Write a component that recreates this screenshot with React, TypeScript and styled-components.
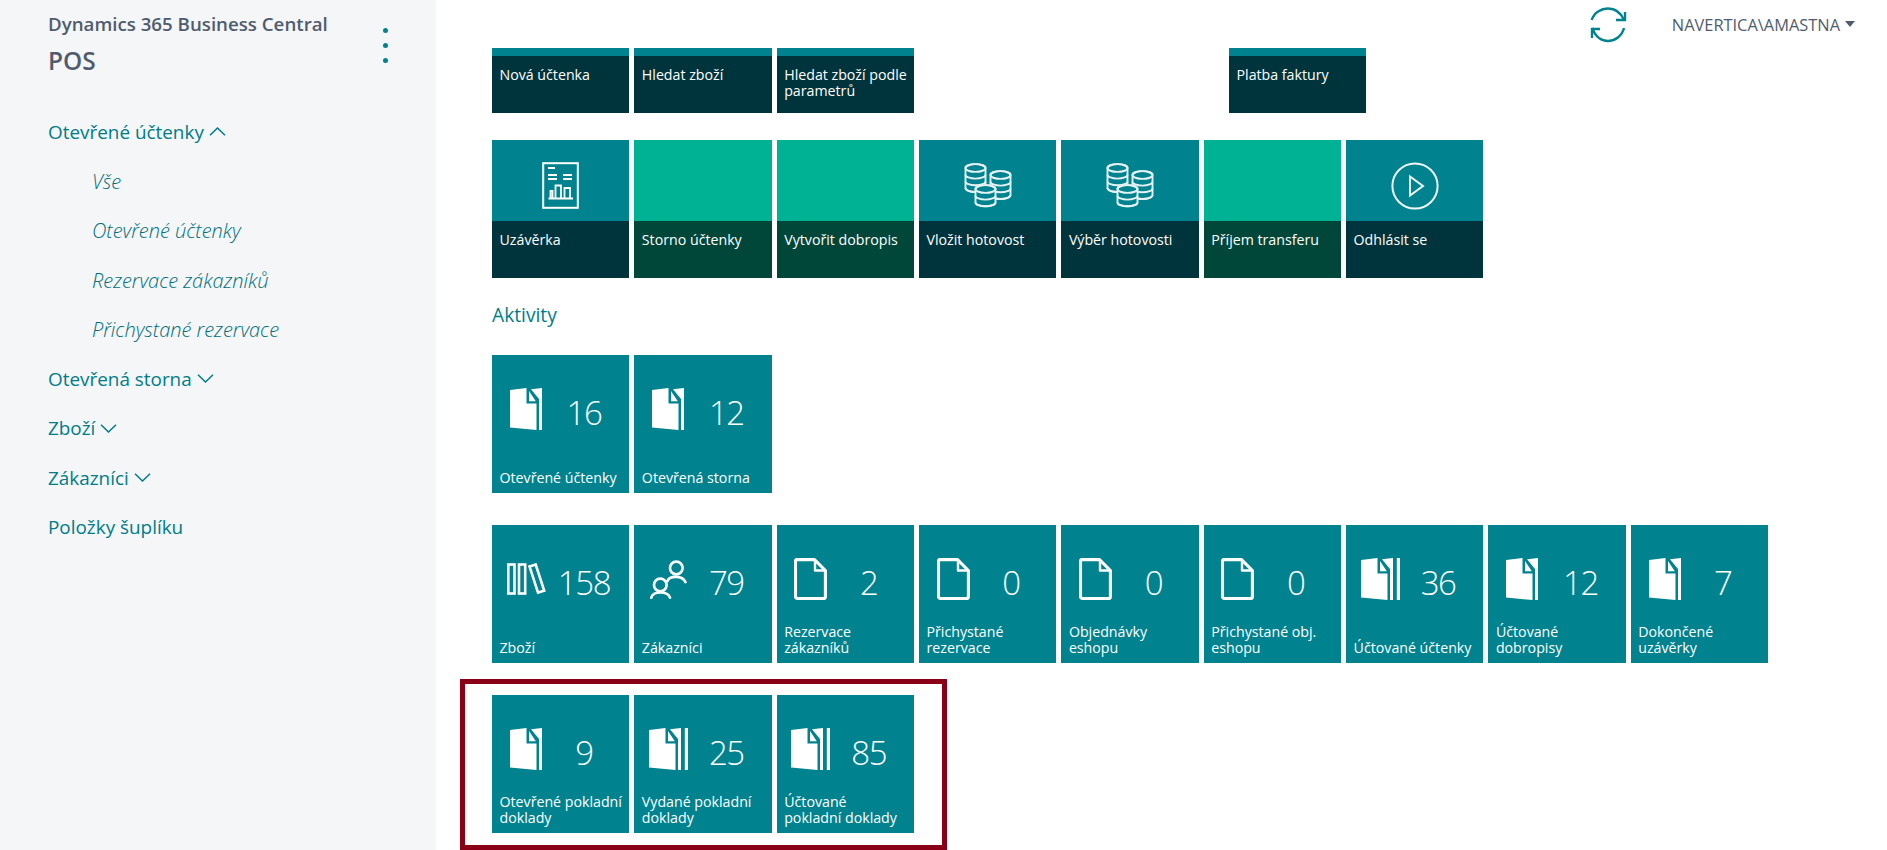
import React from "react";
import styled, { createGlobalStyle } from "styled-components";

const TEAL = "#00828f";
const DARK = "#00343c";
const GREEN = "#00b294";
const DARKGREEN = "#00473a";
const LINK = "#007c88";
const SUBLINK = "#006f7b";
const SLATE = "#505c6d";

const Global = createGlobalStyle`
  html, body { margin: 0; padding: 0; background: #fff; height: 100%; }
  body { font-family: "Open Sans", "Liberation Sans", sans-serif; overflow: hidden; }
  * { box-sizing: border-box; }
`;

const Page = styled.div`
  display: flex;
  width: 1887px;
  height: 850px;
  overflow: hidden;
`;

const Sidebar = styled.aside`
  width: 436px;
  flex: none;
  background: #f5f6f8;
  padding-left: 48px;
  display: flex;
  flex-direction: column;
`;

const SideHead = styled.div`
  display: flex;
  justify-content: space-between;
  padding-right: 48px;
  height: 107px;
  flex: none;
`;

const Titles = styled.div`
  padding-top: 12px;
`;

const Product = styled.div`
  font-size: 18.7px;
  font-weight: 600;
  line-height: 24px;
  color: ${SLATE};
  white-space: nowrap;
`;

const PageName = styled.div`
  font-size: 24.4px;
  font-weight: 600;
  line-height: 32px;
  margin-top: 9px;
  color: ${SLATE};
`;

const Dots = styled.div`
  display: flex;
  flex-direction: column;
  gap: 10px;
  padding-top: 28px;
`;

const Dot = styled.span`
  width: 5px;
  height: 5px;
  border-radius: 50%;
  background: ${TEAL};
`;

const NavItem = styled.div<{ $sub?: boolean }>`
  height: 49.45px;
  flex: none;
  display: flex;
  align-items: center;
  gap: 5px;
  color: ${(p) => (p.$sub ? SUBLINK : LINK)};
  font-size: ${(p) => (p.$sub ? "20px" : "18.9px")};
  font-style: ${(p) => (p.$sub ? "italic" : "normal")};
  font-weight: ${(p) => (p.$sub ? 300 : 400)};
  padding-left: ${(p) => (p.$sub ? "44px" : "0")};
`;

const Main = styled.main`
  flex: 1;
  min-width: 0;
  padding-left: 56px;
  display: flex;
  flex-direction: column;
`;

const TopBar = styled.header`
  height: 48px;
  flex: none;
  display: flex;
  align-items: flex-start;
  justify-content: flex-end;
  padding-right: 32px;
`;

const SyncButton = styled.div`
  margin-top: 6px;
  margin-right: 45px;
  height: 38px;
  color: ${TEAL};
`;

const UserName = styled.div`
  display: flex;
  align-items: center;
  gap: 5px;
  height: 48px;
  color: ${SLATE};
  font-size: 16.4px;
  font-weight: 400;
  white-space: nowrap;
`;

const Caret = styled.span`
  width: 0;
  height: 0;
  border-left: 5px solid transparent;
  border-right: 5px solid transparent;
  border-top: 6px solid ${SLATE};
`;

const Row = styled.div<{ $mt?: number }>`
  display: flex;
  gap: 5px;
  margin-top: ${(p) => p.$mt ?? 0}px;
`;

const SectionTitle = styled.h2`
  margin: 0;
  height: 77px;
  flex: none;
  padding-top: 23px;
  font-size: 19.2px;
  line-height: 28px;
  font-weight: 400;
  color: ${LINK};
`;

const Highlight = styled.div`
  align-self: flex-start;
  margin: 16px 0 0 -32px;
  border: 5px solid #8a0016;
  padding: 11px 28px 12px 27px;
`;

const TileBase = styled.div<{ $pushed?: boolean }>`
  width: 137.35px;
  flex: none;
  color: #fff;
  margin-left: ${(p) => (p.$pushed ? "310px" : "0")};
`;

const ActionTile = styled(TileBase)<{ $green?: boolean; $short?: boolean }>`
  height: ${(p) => (p.$short ? "65px" : "138px")};
  display: flex;
  flex-direction: column;
  background: ${(p) => (p.$green ? GREEN : TEAL)};
`;

const ActionArt = styled.div<{ $short?: boolean }>`
  height: ${(p) => (p.$short ? "8px" : "81px")};
  flex: none;
  display: flex;
  justify-content: center;
  padding-top: ${(p) => (p.$short ? "0" : "22px")};
`;

const ActionLabel = styled.div<{ $green?: boolean }>`
  flex: 1;
  padding: 10.5px 2px 0 7.5px;
  background: ${(p) => (p.$green ? DARKGREEN : DARK)};
  font-size: 14.2px;
  line-height: 16px;
`;

const CountTile = styled(TileBase)`
  height: 138px;
  background: ${TEAL};
  display: flex;
  flex-direction: column;
  justify-content: space-between;
  padding-bottom: 7px;
`;

const CountBody = styled.div`
  display: flex;
  height: 75px;
  padding-top: 33px;
`;

const CountIcon = styled.div`
  width: 68px;
  height: 42px;
  flex: none;
  display: flex;
  align-items: center;
  justify-content: center;
`;

const CountValue = styled.div`
  width: 48px;
  flex: none;
  display: flex;
  justify-content: center;
  height: 50px;
  line-height: 50px;
  font-size: 33px;
  font-weight: 300;
  letter-spacing: -1.4px;
  white-space: nowrap;
`;

const CountLabel = styled.div`
  padding: 0 2px 0 7.5px;
  font-size: 14.2px;
  line-height: 16px;
  white-space: pre-line;
`;

type IconKind = "doc1" | "doc2" | "outline" | "books" | "users";

const DocIcon = ({ stripes }: { stripes: 1 | 2 }) => (
  <svg width={stripes === 1 ? 32 : 39} height={42} viewBox={`0 0 ${stripes === 1 ? 32 : 39} 42`} fill="#fff">
    <path d="M0 2 L16.5 0 V15.5 H26.5 V42 L0 39.5 Z" />
    <path d="M19 3 L25.8 13.3 H19 Z" />
    <path d="M21 1.2 L32 0 V42 H29 V11 Z" />
    {stripes === 2 && <path d="M35.8 0 H39 V42 H35.8 Z" />}
  </svg>
);

const OutlineDoc = () => (
  <svg width={33} height={42} viewBox="0 0 33 42" fill="none" stroke="#fff" strokeWidth={3.1} strokeLinejoin="round">
    <path d="M3 1.6 H20.5 L31.4 12.5 V38.5 a2 2 0 0 1 -2 2 H3.5 a2 2 0 0 1 -2 -2 V3 a1.5 1.5 0 0 1 1.5 -1.5 Z" />
    <path d="M21 3 V12.5 H31" strokeWidth={2.4} />
  </svg>
);

const BooksIcon = () => (
  <svg width={39} height={32} viewBox="0 0 39 32" fill="none" stroke="#fff" strokeWidth={2.6}>
    <rect x={1.3} y={1.5} width={6.2} height={29} />
    <rect x={12} y={1.5} width={6.2} height={29} />
    <path d="M22.5 3.4 L28.7 1.5 L37.2 27.6 L31 29.7 Z" />
  </svg>
);

const UsersIcon = () => (
  <svg width={37} height={39} viewBox="0 0 37 39" fill="none" stroke="#fff" strokeWidth={2.7} strokeLinecap="round">
    <circle cx={26.3} cy={8} r={6.3} />
    <path d="M17.5 21 C19.5 15.3 32.5 15.3 35.4 22" />
    <circle cx={10.3} cy={25} r={6.3} />
    <path d="M1.3 37.6 C3 30.8 17.5 30.8 20 37.6" />
  </svg>
);

const icons: Record<IconKind, React.ReactNode> = {
  doc1: <DocIcon stripes={1} />,
  doc2: <DocIcon stripes={2} />,
  outline: <OutlineDoc />,
  books: <BooksIcon />,
  users: <UsersIcon />,
};

const ReportIcon = () => (
  <svg width={37} height={47} viewBox="0 0 37 47" fill="none" stroke="#fff" strokeWidth={2}>
    <rect x={1.2} y={1.2} width={34.6} height={44.6} />
    <path d="M6 6 H13 M6 13 H15 M6 17 H15 M21 13 H30 M21 17 H30 M6.5 36.5 H31" />
    <path d="M8.5 36 V29 H10.5 V36 M13.5 36 V23.5 H19 V36 M22.5 36 V26 H28 V36" strokeWidth={1.8} />
  </svg>
);

const CoinStack = ({ x, y, discs }: { x: number; y: number; discs: number }) => {
  const pitch = 6.7;
  const rx = 10;
  const ry = 3.9;
  const lines = [];
  for (let i = 1; i <= discs; i += 1) {
    lines.push(
      <path key={i} d={`M${x} ${y + i * pitch} a${rx} ${ry} 0 0 0 ${rx * 2} 0`} />,
    );
  }
  const bottom = y + discs * pitch;
  return (
    <g>
      <path
        d={`M${x} ${y} a${rx} ${ry} 0 0 1 ${rx * 2} 0 V${bottom} a${rx} ${ry} 0 0 1 ${-rx * 2} 0 Z`}
        fill={TEAL}
      />
      <ellipse cx={x + rx} cy={y} rx={rx} ry={ry} />
      {lines}
    </g>
  );
};

const CoinsIcon = () => (
  <svg width={48} height={46} viewBox="0 0 48 46" fill="none" stroke="#e4f2f3" strokeWidth={1.9}>
    <CoinStack x={1.5} y={6} discs={3} />
    <CoinStack x={26.5} y={13} discs={3} />
    <CoinStack x={11.5} y={27} discs={2} />
  </svg>
);

const PlayIcon = () => (
  <svg width={48} height={48} viewBox="0 0 48 48" fill="none" stroke="#eef8f8" strokeWidth={2}>
    <circle cx={24} cy={24} r={22.6} />
    <path d="M19 14.5 L32 24 L19 33.5 Z" />
  </svg>
);

const SyncIcon = () => (
  <svg width={37} height={38} viewBox="0 0 37 38" fill="none" stroke="currentColor" strokeWidth={2.4}>
    <path d="M1.7 14 C4 6.5 11 2.5 18 2.5 C25 2.5 31 7 34 14" />
    <path d="M26 14 H35 V6" />
    <path d="M34 22 C32 30 25 35 18 35 C11 35 5 30 2.2 22" />
    <path d="M10 23 H2 V32" />
  </svg>
);

const Chevron = ({ up }: { up?: boolean }) => (
  <svg width={17} height={9} viewBox="0 0 17 9" fill="none" stroke={LINK} strokeWidth={1.5}>
    <path d={up ? "M1 8.3 L8.5 1 L16 8.3" : "M1 0.8 L8.5 8 L16 0.8"} />
  </svg>
);

const nav: { text: string; sub?: boolean; chevron?: "up" | "down" }[] = [
  { text: "Otevřené účtenky", chevron: "up" },
  { text: "Vše", sub: true },
  { text: "Otevřené účtenky", sub: true },
  { text: "Rezervace zákazníků", sub: true },
  { text: "Přichystané rezervace", sub: true },
  { text: "Otevřená storna", chevron: "down" },
  { text: "Zboží", chevron: "down" },
  { text: "Zákazníci", chevron: "down" },
  { text: "Položky šuplíku" },
];

const topActions = ["Nová účtenka", "Hledat zboží", "Hledat zboží podle parametrů"];

const mainActions: { label: string; icon?: React.ReactNode; green?: boolean }[] = [
  { label: "Uzávěrka", icon: <ReportIcon /> },
  { label: "Storno účtenky", green: true },
  { label: "Vytvořit dobropis", green: true },
  { label: "Vložit hotovost", icon: <CoinsIcon /> },
  { label: "Výběr hotovosti", icon: <CoinsIcon /> },
  { label: "Příjem transferu", green: true },
  { label: "Odhlásit se", icon: <PlayIcon /> },
];

type Cue = { label: string; value: number; icon: IconKind };

const cuesA: Cue[] = [
  { label: "Otevřené účtenky", value: 16, icon: "doc1" },
  { label: "Otevřená storna", value: 12, icon: "doc1" },
];

const cuesB: Cue[] = [
  { label: "Zboží", value: 158, icon: "books" },
  { label: "Zákazníci", value: 79, icon: "users" },
  { label: "Rezervace zákazníků", value: 2, icon: "outline" },
  { label: "Přichystané rezervace", value: 0, icon: "outline" },
  { label: "Objednávky eshopu", value: 0, icon: "outline" },
  { label: "Přichystané obj. eshopu", value: 0, icon: "outline" },
  { label: "Účtované účtenky", value: 36, icon: "doc2" },
  { label: "Účtované\ndobropisy", value: 12, icon: "doc1" },
  { label: "Dokončené uzávěrky", value: 7, icon: "doc1" },
];

const cuesC: Cue[] = [
  { label: "Otevřené pokladní doklady", value: 9, icon: "doc1" },
  { label: "Vydané pokladní doklady", value: 25, icon: "doc2" },
  { label: "Účtované\npokladní doklady", value: 85, icon: "doc2" },
];

const CueRow = ({ cues }: { cues: Cue[] }) => (
  <>
    {cues.map((c) => (
      <CountTile key={c.label}>
        <CountBody>
          <CountIcon>{icons[c.icon]}</CountIcon>
          <CountValue>{c.value}</CountValue>
        </CountBody>
        <CountLabel>{c.label}</CountLabel>
      </CountTile>
    ))}
  </>
);

export default function App() {
  return (
    <Page>
      <Global />
      <Sidebar>
        <SideHead>
          <Titles>
            <Product>Dynamics 365 Business Central</Product>
            <PageName>POS</PageName>
          </Titles>
          <Dots>
            <Dot />
            <Dot />
            <Dot />
          </Dots>
        </SideHead>
        {nav.map((n, i) => (
          <NavItem key={i} $sub={n.sub}>
            {n.text}
            {n.chevron && <Chevron up={n.chevron === "up"} />}
          </NavItem>
        ))}
      </Sidebar>
      <Main>
        <TopBar>
          <SyncButton>
            <SyncIcon />
          </SyncButton>
          <UserName>
            NAVERTICA\AMASTNA
            <Caret />
          </UserName>
        </TopBar>
        <Row>
          {topActions.map((t) => (
            <ActionTile key={t} $short>
              <ActionArt $short />
              <ActionLabel>{t}</ActionLabel>
            </ActionTile>
          ))}
          <ActionTile $short $pushed>
            <ActionArt $short />
            <ActionLabel>Platba faktury</ActionLabel>
          </ActionTile>
        </Row>
        <Row $mt={27}>
          {mainActions.map((a) => (
            <ActionTile key={a.label} $green={a.green}>
              <ActionArt>{a.icon}</ActionArt>
              <ActionLabel $green={a.green}>{a.label}</ActionLabel>
            </ActionTile>
          ))}
        </Row>
        <SectionTitle>Aktivity</SectionTitle>
        <Row>
          <CueRow cues={cuesA} />
        </Row>
        <Row $mt={32}>
          <CueRow cues={cuesB} />
        </Row>
        <Highlight>
          <Row>
            <CueRow cues={cuesC} />
          </Row>
        </Highlight>
      </Main>
    </Page>
  );
}
